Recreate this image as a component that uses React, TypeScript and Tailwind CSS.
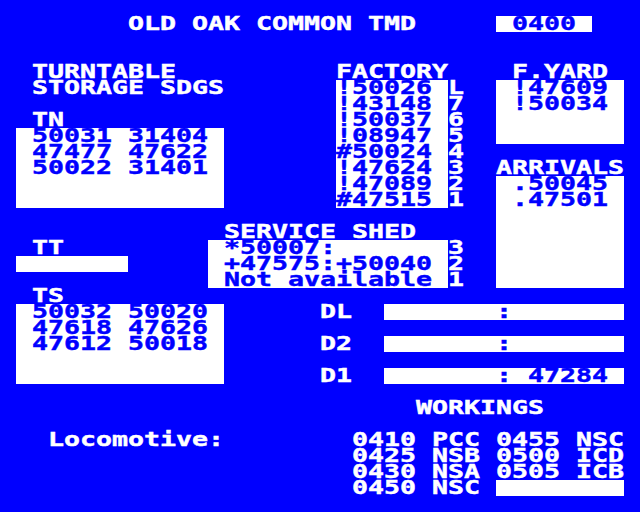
import clsx from 'clsx';

// Character-grid screen: 40 columns x 32 rows of 16px cells.
const glyph =
  "font-['DejaVu_Sans_Mono',monospace] font-bold text-[26.58px] leading-4 whitespace-pre scale-y-[0.722] origin-[0_5.66px] [-webkit-text-stroke:0.6px_currentColor]";

function Lines({ lines, className }: { lines: string[]; className?: string }) {
  return (
    <div className={clsx('flex flex-col', className)}>
      {lines.map((l, i) => (
        <div key={i} className="h-4">
          <div className={glyph}>{l}</div>
        </div>
      ))}
    </div>
  );
}

const factory = ['!50026', '!43148', '!50037', '!08947', '#50024', '!47624', '!47089', '#47515'];
const workings = ['0410 PCC 0455 NSC', '0425 NSB 0500 ICD', '0430 NSA 0505 ICB', '0450 NSC'];

export default function App() {
  return (
    <div className="grid grid-cols-[repeat(40,16px)] grid-rows-[repeat(32,16px)] w-[640px] h-[512px] overflow-hidden bg-[#0000ff] text-white">
      {/* white panels */}
      <div className="bg-white col-start-32 col-span-6 row-start-2" />
      <div className="bg-white col-start-2 col-span-13 row-start-9 row-span-5" />
      <div className="bg-white col-start-22 col-span-7 row-start-6 row-span-8" />
      <div className="bg-white col-start-32 col-span-8 row-start-6 row-span-4" />
      <div className="bg-white col-start-32 col-span-8 row-start-12 row-span-7" />
      <div className="bg-white col-start-2 col-span-7 row-start-17" />
      <div className="bg-white col-start-14 col-span-15 row-start-16 row-span-3" />
      <div className="bg-white col-start-2 col-span-13 row-start-20 row-span-5" />
      <div className="bg-white col-start-25 col-span-15 row-start-20" />
      <div className="bg-white col-start-25 col-span-15 row-start-22" />
      <div className="bg-white col-start-25 col-span-15 row-start-24" />
      <div className="bg-white col-start-32 col-span-8 row-start-31" />

      {/* headings */}
      <Lines lines={['OLD OAK COMMON TMD']} className="col-start-9 row-start-2" />
      <Lines lines={['TURNTABLE', 'STORAGE SDGS']} className="col-start-3 row-start-5 row-span-2" />
      <Lines lines={['FACTORY']} className="col-start-22 row-start-5" />
      <Lines lines={['F.YARD']} className="col-start-33 row-start-5" />
      <Lines lines={['ARRIVALS']} className="col-start-32 row-start-11" />
      <Lines lines={['TN']} className="col-start-3 row-start-8" />
      <Lines lines={['TT']} className="col-start-3 row-start-16" />
      <Lines lines={['SERVICE SHED']} className="col-start-15 row-start-15" />
      <Lines lines={['TS']} className="col-start-3 row-start-19" />
      <Lines lines={['DL']} className="col-start-21 row-start-20" />
      <Lines lines={['D2']} className="col-start-21 row-start-22" />
      <Lines lines={['D1']} className="col-start-21 row-start-24" />
      <Lines lines={['WORKINGS']} className="col-start-27 row-start-26" />
      <Lines lines={['Locomotive:']} className="col-start-4 row-start-28" />
      <Lines lines={['L', '7', '6', '5', '4', '3', '2', '1']} className="col-start-29 row-start-6 row-span-8" />
      <Lines lines={['3', '2', '1']} className="col-start-29 row-start-16 row-span-3" />
      <Lines lines={workings} className="col-start-23 row-start-28 row-span-4" />

      {/* contents of the panels */}
      <Lines lines={['0400']} className="col-start-33 row-start-2 text-[#0000ff]" />
      <Lines
        lines={['50031 31404', '47477 47622', '50022 31401']}
        className="col-start-3 row-start-9 row-span-3 text-[#0000ff]"
      />
      <Lines lines={factory} className="col-start-22 row-start-6 row-span-8 text-[#0000ff]" />
      <Lines lines={['!47609', '!50034']} className="col-start-33 row-start-6 row-span-2 text-[#0000ff]" />
      <Lines lines={['.50045', '.47501']} className="col-start-33 row-start-12 row-span-2 text-[#0000ff]" />
      <Lines
        lines={['*50007:', '+47575:+50040', 'Not available']}
        className="col-start-15 row-start-16 row-span-3 text-[#0000ff]"
      />
      <Lines
        lines={['50032 50020', '47618 47626', '47612 50018']}
        className="col-start-3 row-start-20 row-span-3 text-[#0000ff]"
      />
      <Lines lines={[':']} className="col-start-32 row-start-20 text-[#0000ff]" />
      <Lines lines={[':']} className="col-start-32 row-start-22 text-[#0000ff]" />
      <Lines lines={[': 47284']} className="col-start-32 row-start-24 text-[#0000ff]" />
    </div>
  );
}
